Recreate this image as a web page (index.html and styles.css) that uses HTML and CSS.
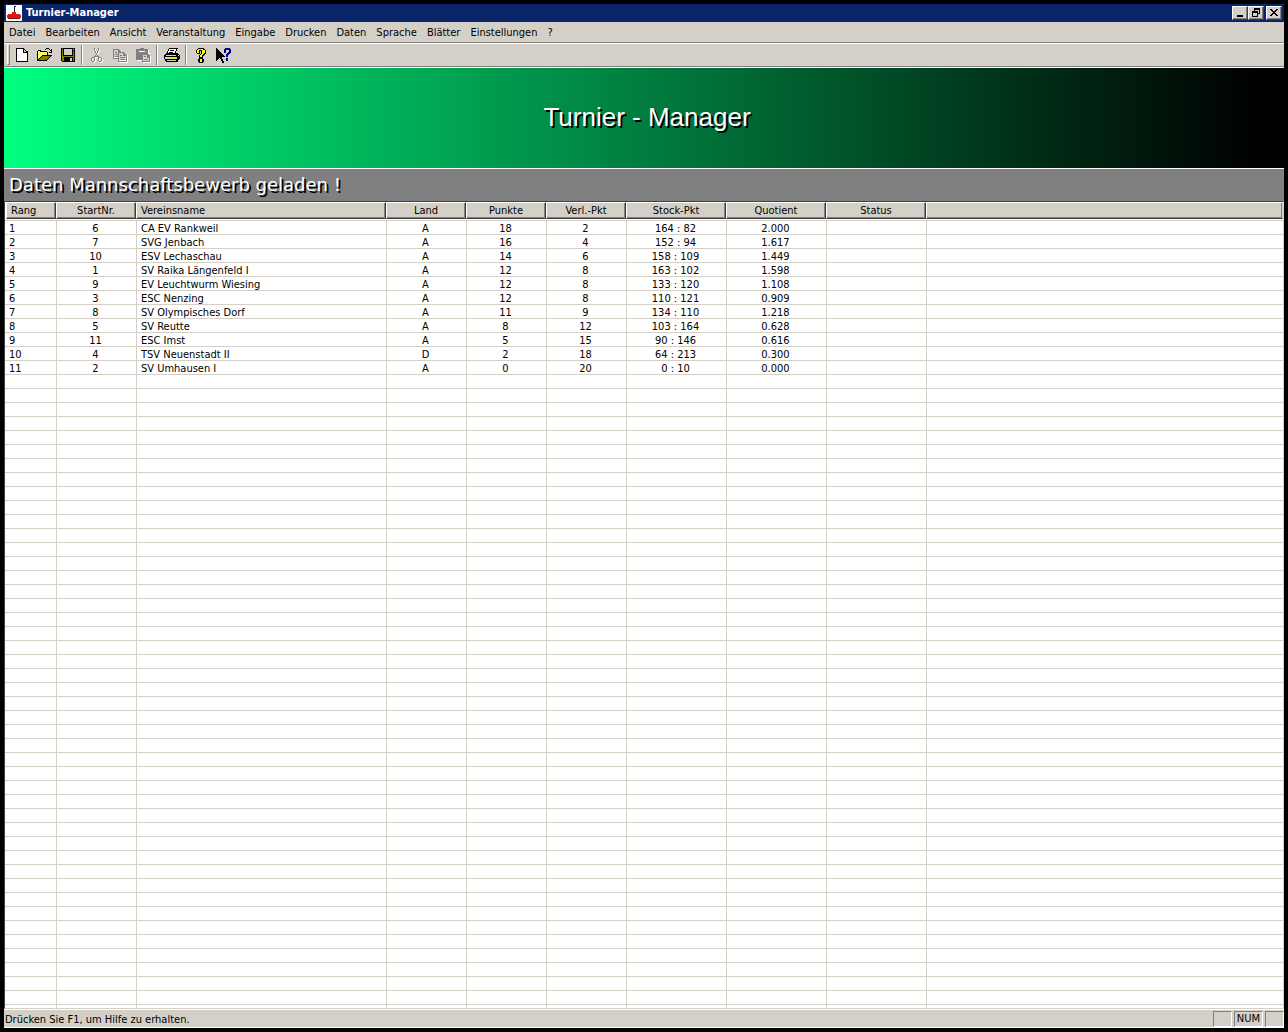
FILE: index.html
```
<!DOCTYPE html>
<html lang="de">
<head>
<meta charset="utf-8">
<title>Turnier-Manager</title>
<link rel="stylesheet" href="styles.css">
</head>
<body>
<div class="window">
  <header class="titlebar">
    <svg class="app-icon" width="16" height="16" viewBox="0 0 16 16" shape-rendering="crispEdges" aria-hidden="true"><path fill="#fff" d="M0 0h16v16H0z"/><path fill="#222" d="M8 1h2v1H9v5H8z"/><path fill="#e01818" d="M6 7h4v2h4v1h1v3h-1v1H2v-1H1v-3h1V9h4z"/><path fill="#801010" d="M2 13h12v1H2z"/></svg>
    <h1 class="titlebar-text">Turnier-Manager</h1>
    <div class="window-buttons">
      <button class="window-button" aria-label="Minimieren"><svg width="12" height="10" viewBox="0 0 12 10" shape-rendering="crispEdges"><path d="M3 7h6v2H3z"/></svg></button>
      <button class="window-button" aria-label="Wiederherstellen"><svg width="12" height="10" viewBox="0 0 12 10" shape-rendering="crispEdges"><path fill-rule="evenodd" d="M4 0h6v6H8V5h1V2H5v1H4zM2 3h6v6H2zM3 5h4v3H3z"/></svg></button>
      <button class="window-button close" aria-label="Schließen"><svg width="12" height="10" viewBox="0 0 12 10" shape-rendering="crispEdges"><path d="M2 1h2v1h1v1h2V2h1V1h2v1H9v1H8v1H7v1h1v1h1v1h1v1H8V7H7V6H5v1H4v1H2V7h1V6h1V5h1V4H4V3H3V2H2z"/></svg></button>
    </div>
  </header>
  <nav class="menubar">
    <button>Datei</button><button>Bearbeiten</button><button>Ansicht</button><button>Veranstaltung</button><button>Eingabe</button><button>Drucken</button><button>Daten</button><button>Sprache</button><button>Blätter</button><button>Einstellungen</button><button>?</button>
  </nav>
  <div class="toolbar" role="toolbar">
    <span class="grip"></span>
    <button aria-label="Neu"><svg viewBox="0 0 16 16"><path fill="#fff" d="M3 2h7v3h3v9H3z"/><path d="M2 1h8v1H3v12h10V6h-3V5h3V4h1v11H2zM9 2h1v4H9zM10 2h1v1h-1zM11 3h1v1h-1zM12 4h1v1h-1z"/></svg></button>
    <button aria-label="Öffnen"><svg viewBox="0 0 16 16"><path fill="#ff6" d="M1 4h3v1h6v3H5v1H4v1H3v1H2v1H1z"/><path fill="#808000" d="M5 9h9v1h-1v1h-1v1h-1v1H2v-1h1v-1h1v-1h1z"/><path d="M1 3h3v1h6v1h1v3h4v1h-1v1h-1v1h-1v1h-1v1h-1v1H0V4h1v8h1v-1h1v-1h1V9h1V8h5V5H3V4H1zm4 6v1H4v1H3v1H2v1h8v-1h1v-1h1v-1h1V9zM9 1h3v1H9zM8 2h1v1H8zM12 2h1v1h1V2h1v4h-3V5h2V4h-1V3h-1z" fill-rule="evenodd"/></svg></button>
    <button aria-label="Speichern"><svg viewBox="0 0 16 16"><path d="M1 1h14v14H2v-1H1z"/><path fill="#808000" d="M2 2h1v7h10V4h1v10H2z"/><path fill="#d4d0c8" d="M4 2h8v6H4zM13 2h1v1h-1z"/><path d="M4 10h9v4H4z"/><path fill="#d4d0c8" d="M10 11h2v3h-2z"/></svg></button>
    <span class="separator"></span>
    <button disabled aria-label="Ausschneiden"><svg viewBox="0 0 16 16"><path fill="#fff" transform="translate(1 1)" d="M5 1h1v3H5zM9 1h1v3H9zM6 4h1v2H6zM8 4h1v2H8zM7 6h1v2H7zM6 8h1v1h2V8H8v1h2v1h2v1h1v3h-1v1h-2v-1H9v-4H6v4H5v1H3v-1H2v-3h1v-1h2V9h1zM4 11H3v3h2v-3zM10 11v3h2v-3z" fill-rule="evenodd"/><path fill="#808080" d="M5 1h1v3H5zM9 1h1v3H9zM6 4h1v2H6zM8 4h1v2H8zM7 6h1v2H7zM6 8h1v1h2V8H8v1h2v1h2v1h1v3h-1v1h-2v-1H9v-4H6v4H5v1H3v-1H2v-3h1v-1h2V9h1zM4 11H3v3h2v-3zM10 11v3h2v-3z" fill-rule="evenodd"/></svg></button>
    <button disabled aria-label="Kopieren"><svg viewBox="0 0 16 16"><path fill="#fff" d="M2 3h6v1h2v2h3v2h3v8H7v-4H2z"/><path fill="#d4d0c8" d="M2 3h5v3h1v4H2zM7 6h5v3h2v4H7z"/><path fill="#808080" fill-rule="evenodd" d="M1 2h6v1h1v1h1v1H6V3H2v8h4v1H1zM3 5h2v1H3zM3 7h3v1H3zM3 9h3v1H3zM6 5h6v1h1v1h1v1h1v7H6zm1 1v8h7V9h-3V6zM8 8h2v1H8zM8 10h5v1H8zM8 12h5v1H8z"/></svg></button>
    <button disabled aria-label="Einfügen"><svg viewBox="0 0 16 16"><path fill="#fff" d="M2 3h12v3h1v3h1v7H8v-2H2z"/><path fill="#808080" d="M1 2h4V1h4v1h4v5h1v1h1v7H7v-2H1z"/><path fill="#fff" d="M4 4h6v1H4z"/><path fill="#d4d0c8" d="M8 8h4v3h2v3H8z"/><path fill="#808080" d="M9 9h2v1H9zM9 12h4v1H9z"/></svg></button>
    <span class="separator"></span>
    <button aria-label="Drucken"><svg viewBox="0 0 16 16"><path fill="#fff" d="M5 2h8v1h-1v4H3V6h1V4h1z"/><path d="M5 1h9v1h-1v2h-1v2h2v1h1v1h1v4h-1v1h-1v2H2v-1H1v-2H0V8h1V7h1V6h1V4h1V2h1zm0 1v2H4v2h7V4h1V2zM6 3h4v1H6zM5 5h4v1H5zM2 8v1h10V8zM1 10v2h12v-2z" fill-rule="evenodd"/><path fill="#d4d0c8" d="M2 8h10v1H2zM1 10h12v2H1zM3 13h9v1H3zM14 8h1v1h-1z"/><path fill="#ff0" d="M8 11h3v1H8z"/></svg></button>
    <span class="separator"></span>
    <button aria-label="Hilfe"><svg viewBox="0 0 16 16"><path d="M5 1h6v1h1v1h1v4h-1v1h-1v1h-1v2H6V8h1V7h1V4H7v3H4V6H3V3h1V2h1zM6 11h4v1h1v3h-1v1H6v-1H5v-3h1z"/><path fill="#ff0" d="M5 2h5v1h2v3h-1v1h-1v1H9v2H7V8h1V7h1V3H6v3H4V3h1zM7 12h2v3H7z"/></svg></button>
    <button aria-label="Kontexthilfe"><svg viewBox="0 0 16 16"><path d="M0 1h1v1h1v1h1v1h1v1h1v1h1v1h1v1h1v1h1v1H6v2h1v2h1v2H6v-2H5v-2H4v-1H3v1H2v1H1v1H0z"/><path fill="#000080" d="M9 1h5v1h1v4h-1v1h-1v1h-1v2h-2V7h1V6h1V5h1V3h-3v3H8V2h1zM10 11h2v3h-2z"/></svg></button>
  </div>
  <main class="content">
    <div class="banner">Turnier - Manager</div>
    <h2 class="message">Daten Mannschaftsbewerb geladen !</h2>
    <div class="list">
      <table class="standings">
        <colgroup><col class="w-rank"><col class="w-medium"><col class="w-name"><col class="w-medium"><col class="w-medium"><col class="w-medium"><col class="w-wide"><col class="w-wide"><col class="w-wide"><col></colgroup>
        <thead><tr><th>Rang</th><th>StartNr.</th><th>Vereinsname</th><th>Land</th><th>Punkte</th><th>Verl.-Pkt</th><th>Stock-Pkt</th><th>Quotient</th><th>Status</th><th></th></tr></thead>
        <tbody>
          <tr><td>1</td><td>6</td><td>CA EV Rankweil</td><td>A</td><td>18</td><td>2</td><td>164 : 82</td><td>2.000</td><td></td><td></td></tr>
          <tr><td>2</td><td>7</td><td>SVG Jenbach</td><td>A</td><td>16</td><td>4</td><td>152 : 94</td><td>1.617</td><td></td><td></td></tr>
          <tr><td>3</td><td>10</td><td>ESV Lechaschau</td><td>A</td><td>14</td><td>6</td><td>158 : 109</td><td>1.449</td><td></td><td></td></tr>
          <tr><td>4</td><td>1</td><td>SV Raika Längenfeld I</td><td>A</td><td>12</td><td>8</td><td>163 : 102</td><td>1.598</td><td></td><td></td></tr>
          <tr><td>5</td><td>9</td><td>EV Leuchtwurm Wiesing</td><td>A</td><td>12</td><td>8</td><td>133 : 120</td><td>1.108</td><td></td><td></td></tr>
          <tr><td>6</td><td>3</td><td>ESC Nenzing</td><td>A</td><td>12</td><td>8</td><td>110 : 121</td><td>0.909</td><td></td><td></td></tr>
          <tr><td>7</td><td>8</td><td>SV Olympisches Dorf</td><td>A</td><td>11</td><td>9</td><td>134 : 110</td><td>1.218</td><td></td><td></td></tr>
          <tr><td>8</td><td>5</td><td>SV Reutte</td><td>A</td><td>8</td><td>12</td><td>103 : 164</td><td>0.628</td><td></td><td></td></tr>
          <tr><td>9</td><td>11</td><td>ESC Imst</td><td>A</td><td>5</td><td>15</td><td>90 : 146</td><td>0.616</td><td></td><td></td></tr>
          <tr><td>10</td><td>4</td><td>TSV Neuenstadt II</td><td>D</td><td>2</td><td>18</td><td>64 : 213</td><td>0.300</td><td></td><td></td></tr>
          <tr><td>11</td><td>2</td><td>SV Umhausen I</td><td>A</td><td>0</td><td>20</td><td>0 : 10</td><td>0.000</td><td></td><td></td></tr>
          <tr class="filler"><td></td><td></td><td></td><td></td><td></td><td></td><td></td><td></td><td></td><td></td></tr>
        </tbody>
      </table>
    </div>
  </main>
  <footer class="statusbar">
    <span class="status-text">Drücken Sie F1, um Hilfe zu erhalten.</span>
    <span class="pane pane-small"></span>
    <span class="pane">NUM</span>
    <span class="pane pane-small"></span>
  </footer>
</div>
</body>
</html>
```
FILE: styles.css
```
* { box-sizing: border-box; }

body {
  margin: 0;
  background: #000;
  color: #000;
  font: 11px/14px "DejaVu Sans Condensed", "DejaVu Sans", sans-serif;
}

button {
  font: inherit;
  color: inherit;
  border: 0;
  padding: 0;
  background: none;
}

.window {
  display: flex;
  flex-direction: column;
  height: 100vh;
  padding: 4px;
}

.titlebar {
  display: flex;
  align-items: center;
  flex: none;
  height: 18px;
  padding: 0 2px;
  background: #0a246a;
}

.titlebar-text {
  flex: 1;
  margin: 0 0 0 4px;
  color: #fff;
  font-size: 11px;
  line-height: 18px;
}

.window-buttons { display: flex; }

.window-button {
  display: flex;
  align-items: center;
  justify-content: center;
  width: 16px;
  height: 14px;
  background: #d4d0c8;
  border: 1px solid;
  border-color: #fff #404040 #404040 #fff;
  box-shadow: inset -1px -1px #808080;
}

.close { margin-left: 2px; }

.menubar {
  display: flex;
  flex: none;
  height: 21px;
  background: #d4d0c8;
  border-bottom: 1px solid #808080;
}

.menubar button { padding: 2px 5px 0; }

.toolbar {
  display: flex;
  align-items: flex-start;
  flex: none;
  height: 24px;
  padding-left: 3px;
  background: #d4d0c8;
  border-top: 1px solid #fff;
  border-bottom: 1px solid #808080;
}

.toolbar button {
  display: flex;
  align-items: center;
  justify-content: center;
  width: 23px;
  height: 21px;
}

.toolbar svg {
  width: 16px;
  height: 16px;
  shape-rendering: crispEdges;
}

.grip {
  width: 3px;
  height: 21px;
  border: 1px solid;
  border-color: #fff #808080 #808080 #fff;
}

.separator {
  width: 2px;
  height: 20px;
  margin: 1px 2px;
  border-left: 1px solid #808080;
  border-right: 1px solid #fff;
}

.content {
  display: flex;
  flex: 1;
  flex-direction: column;
  min-height: 0;
  border-top: 1px solid #fff;
}

.banner {
  flex: none;
  height: 100px;
  padding-left: 6px;
  background: linear-gradient(90deg, #00ff80, #000 98%);
  color: #fff;
  font: 26px/98px "Liberation Sans", Arial, sans-serif;
  text-align: center;
  text-shadow: 2px 2px #000;
}

.message {
  flex: none;
  height: 33px;
  margin: 0;
  padding-left: 5px;
  background: #808080;
  border-top: 1px solid #fff;
  color: #fff;
  font: 18px/32px "DejaVu Sans", sans-serif;
  text-shadow: 2px 2px #000;
}

.list {
  flex: 1;
  min-height: 0;
  padding-left: 1px;
  border: 1px solid;
  border-color: #404040 #d4d0c8 #d4d0c8 #404040;
  background: repeating-linear-gradient(#d4d0c8 0 1px, #fff 1px 14px) 0 18px no-repeat #fff;
}

.standings {
  width: 100%;
  height: 100%;
  table-layout: fixed;
  border-collapse: separate;
  border-spacing: 0;
}

.w-rank { width: 50px; }
.w-medium { width: 80px; }
.w-name { width: 250px; }
.w-wide { width: 100px; }

.standings th {
  height: 17px;
  padding: 1px 4px 0;
  background: #d4d0c8;
  border: 1px solid;
  border-color: #fff #404040 #404040 #fff;
  box-shadow: inset -1px -1px #808080;
  font-weight: 400;
  line-height: 14px;
}

.standings th:last-child { border-right-color: #d4d0c8; }

.standings td {
  height: 14px;
  padding: 0 2px 0 0;
  border-left: 1px solid #d4d0c8;
  text-align: center;
  white-space: nowrap;
}

.standings tbody tr:first-child td { height: 17px; padding-top: 3px; }
.standings tbody .filler td { height: auto; }
.standings th:nth-child(1),
.standings th:nth-child(3) { text-align: left; }
.standings td:nth-child(1) {
  padding-left: 3px;
  border-left: 0;
  text-align: left;
}
.standings td:nth-child(3) { padding-left: 4px; text-align: left; }

.statusbar {
  display: flex;
  align-items: flex-end;
  flex: none;
  gap: 2px;
  height: 19px;
  background: #d4d0c8;
  border-top: 1px solid #fff;
  border-bottom: 1px solid #fff;
}

.status-text {
  flex: 1;
  padding-left: 1px;
  line-height: 14px;
}

.pane {
  height: 16px;
  padding: 0 2px;
  border: 1px solid;
  border-color: #808080 #fff #fff #808080;
}

.pane-small { width: 19px; }
```
